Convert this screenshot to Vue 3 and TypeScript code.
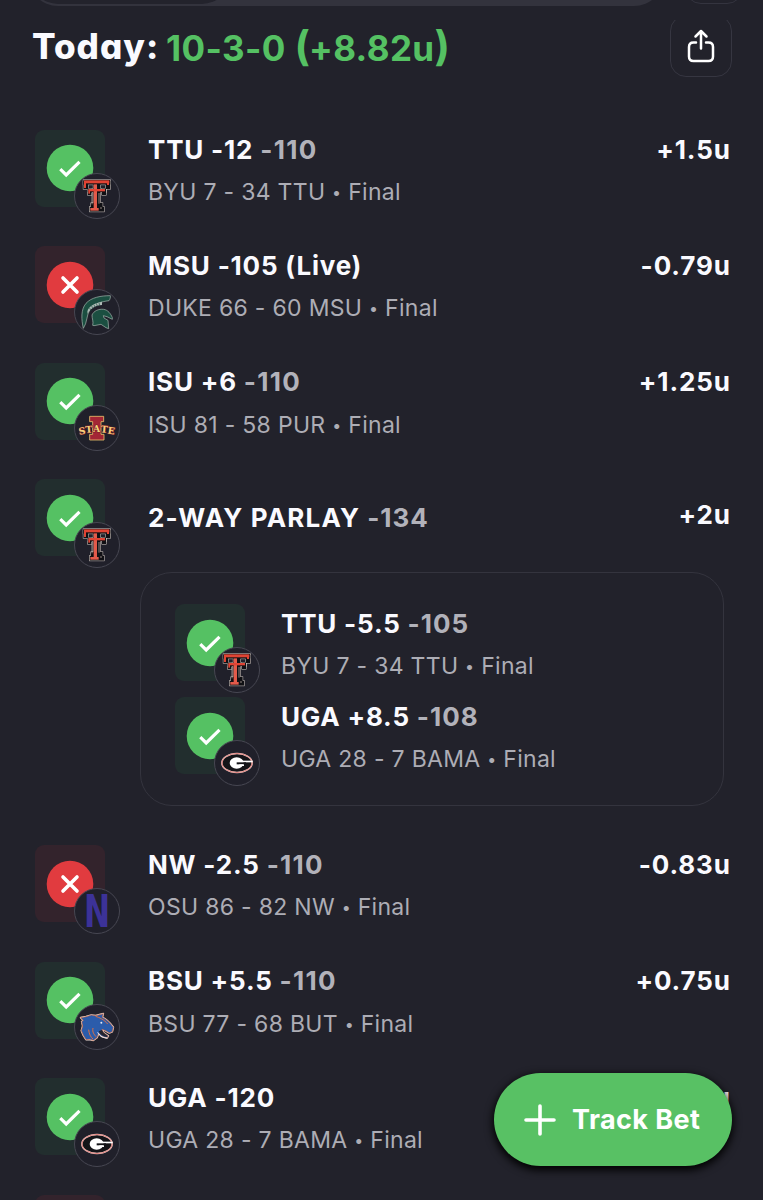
<script setup lang="ts">
type Team = 'ttu' | 'msu' | 'isu' | 'uga' | 'nw' | 'bsu'

interface Leg {
  pick: string
  odds?: string
  score?: string
  won: boolean
  team: Team
}

interface Bet extends Leg {
  units: string
  legs?: Leg[]
}

const bets: Bet[] = [
  { pick: 'TTU -12', odds: '-110', score: 'BYU 7 - 34 TTU', won: true, team: 'ttu', units: '+1.5u' },
  { pick: 'MSU -105 (Live)', score: 'DUKE 66 - 60 MSU', won: false, team: 'msu', units: '-0.79u' },
  { pick: 'ISU +6', odds: '-110', score: 'ISU 81 - 58 PUR', won: true, team: 'isu', units: '+1.25u' },
  {
    pick: '2-WAY PARLAY', odds: '-134', won: true, team: 'ttu', units: '+2u',
    legs: [
      { pick: 'TTU -5.5', odds: '-105', score: 'BYU 7 - 34 TTU', won: true, team: 'ttu' },
      { pick: 'UGA +8.5', odds: '-108', score: 'UGA 28 - 7 BAMA', won: true, team: 'uga' },
    ],
  },
  { pick: 'NW -2.5', odds: '-110', score: 'OSU 86 - 82 NW', won: false, team: 'nw', units: '-0.83u' },
  { pick: 'BSU +5.5', odds: '-110', score: 'BSU 77 - 68 BUT', won: true, team: 'bsu', units: '+0.75u' },
  { pick: 'UGA -120', score: 'UGA 28 - 7 BAMA', won: true, team: 'uga', units: '+1u' },
]
</script>

<template>
  <main class="screen">
    <svg class="symbols" aria-hidden="true">
      <defs>
        <g id="tt-shape">
          <rect x="178" y="181" width="77" height="10" />
          <rect x="178" y="184" width="10" height="20" />
          <rect x="245" y="184" width="10" height="20" />
          <rect x="208" y="186" width="17" height="80" />
          <rect x="191" y="207" width="51" height="7" />
          <rect x="191" y="207" width="8" height="15" />
          <rect x="234" y="207" width="8" height="15" />
          <rect x="197" y="261" width="39" height="11" />
          <rect x="201" y="250" width="31" height="12" />
        </g>
        <symbol id="logo-ttu" viewBox="145 155 144 144">
          <use href="#tt-shape" fill="#d9cfc8" stroke="#d9cfc8" stroke-width="7" />
          <use href="#tt-shape" fill="#101014" stroke="#101014" stroke-width="4" />
          <g fill="#e04434">
            <rect x="178" y="180" width="76" height="9" />
            <rect x="178" y="186" width="6" height="17" />
            <rect x="247" y="186" width="6" height="8" />
            <rect x="207" y="192" width="10" height="72" fill="#e35a4a" />
            <rect x="191" y="206" width="50" height="7" />
            <rect x="191" y="210" width="5" height="10" />
            <rect x="197" y="263" width="25" height="8" fill="#e35a4a" />
          </g>
          <path d="M202 218V252M223 218V250M226 263H232" fill="none" stroke="#d6c3b8" stroke-width="2" />
        </symbol>
        <symbol id="logo-msu" viewBox="145 155 144 144">
          <path d="M176 276C170 250 168 220 184 201C200 183 229 178 257 178C258 183 256 189 253 193C229 196 206 203 196 219C185 237 188 259 176 276Z" fill="#1b4f41" stroke="#a9bab2" stroke-width="2" />
          <path d="M188 226C191 210 207 201 232 196L232 206C212 207 198 216 189 232Z" fill="#aebbb6" />
          <path d="M195 215L199 224M201 209L205 218M208 205L211 213M215 201L218 210M223 199L225 208" stroke="#1d5344" stroke-width="2" />
          <path d="M202 236C207 224 222 217 237 219C250 221 258 232 263 244L263 249L247 241L236 238L238 245L250 252L252 277L244 274L229 264L208 268L204 267C207 256 202 247 202 236Z" fill="#1b4f41" stroke="#a9bab2" stroke-width="2" />
        </symbol>
        <symbol id="logo-isu" viewBox="145 158 144 144">
          <path d="M195 195H237V211H229V249H238V266H195V249H204V211H195Z" fill="#a32535" stroke="#e8c06a" stroke-width="2.5" />
          <g class="isu-word">
            <text x="174" y="249" transform="rotate(-9 174 249)">S</text>
            <text x="194" y="244" transform="rotate(-5 194 244)">T</text>
            <text x="216" y="243">A</text>
            <text x="238" y="244" transform="rotate(5 238 244)">T</text>
            <text x="258" y="248" transform="rotate(9 258 248)">E</text>
          </g>
        </symbol>
        <symbol id="logo-uga" viewBox="145 155 144 144">
          <ellipse cx="217" cy="227" rx="45.500" ry="28.500" fill="#141418" stroke="#f6d9d5" stroke-width="4.500" />
          <ellipse cx="217" cy="227" rx="45.500" ry="28.500" fill="none" stroke="#d85e5a" stroke-width="2.200" />
          <ellipse cx="216" cy="227" rx="21" ry="17" fill="#fff" />
          <rect x="214" y="220" width="50" height="5" fill="#fff" />
          <rect x="216" y="225" width="28" height="6" fill="#141418" />
          <rect x="224" y="231" width="14" height="5" fill="#fff" />
        </symbol>
        <symbol id="logo-nw" viewBox="145 155 144 144">
          <text class="nw-mark" transform="translate(217 276) scale(.71 1)">N</text>
        </symbol>
        <symbol id="logo-bsu" viewBox="145 155 144 144">
          <path d="M168 199L184 196L200 191L213 193L236 187L233 198C246 204 256 214 266 228L263 241L254 245L244 239L232 234L237 244L251 254L247 260L231 255L222 246L217 259L206 267L194 264L184 265L176 252L170 238L174 224L171 211L176 207Z" fill="#2b5cab" stroke="#e9dcd5" stroke-width="5" stroke-linejoin="round" />
          <path d="M168 199L184 196L200 191L213 193L236 187L233 198C246 204 256 214 266 228L263 241L254 245L244 239L232 234L237 244L251 254L247 260L231 255L222 246L217 259L206 267L194 264L184 265L176 252L170 238L174 224L171 211L176 207Z" fill="#2b5cab" stroke="#d5683c" stroke-width="2" stroke-linejoin="round" />
          <path d="M213 195C224 199 238 204 249 218M192 235C193 248 198 257 205 263M205 230C202 243 209 250 214 256" fill="none" stroke="#dd7043" stroke-width="3" />
          <path d="M222 240C228 253 238 256 247 257L249 254L237 244L231 236Z" fill="#24242d" />
          <path d="M219 243C226 256 238 260 248 260" fill="none" stroke="#f0f0f4" stroke-width="3" />
          <circle cx="230" cy="214" r="3" fill="#e5e9f2" />
        </symbol>
        <symbol id="mark-won" viewBox="0 0 48 48">
          <circle cx="24" cy="24" r="23.300" fill="#55c163" />
          <path d="M14.300 25.200L20.200 30.900L33.500 17.800" fill="none" stroke="#fff" stroke-width="3.200" />
        </symbol>
        <symbol id="mark-lost" viewBox="0 0 48 48">
          <circle cx="24" cy="24" r="23.300" fill="#e13b3f" />
          <path d="M17 17L31 31M31 17L17 31" fill="none" stroke="#fff" stroke-width="3.600" stroke-linecap="round" />
        </symbol>
      </defs>
    </svg>

    <div class="topbar">
      <div class="segments"><div class="segment-active"></div></div>
      <div class="filter"></div>
    </div>

    <header class="summary">
      <h1><span class="label">Today:</span><span class="record">10-3-0 <span class="paren">(</span>+8.82u<span class="paren">)</span></span></h1>
      <button class="share" aria-label="Share">
        <svg viewBox="0 0 28 34" width="28" height="34">
          <path d="M9 13.500H6.500Q2 13.500 2 18V27.500Q2 32 6.500 32H21.500Q26 32 26 27.500V18Q26 13.500 21.500 13.500H19M14 19.500V2.500M8.500 7.500L14 2L19.500 7.500" />
        </svg>
      </button>
    </header>

    <section class="bets">
      <template v-for="(bet, i) in bets" :key="i">
        <article class="row" :class="{ parlay: bet.legs }">
          <div class="tile" :class="bet.won ? 'won' : 'lost'">
            <svg class="mark"><use :href="bet.won ? '#mark-won' : '#mark-lost'" /></svg>
            <div class="badge"><svg><use :href="'#logo-' + bet.team" /></svg></div>
          </div>
          <div class="info">
            <div class="title"><span class="pick">{{ bet.pick }}</span> <span v-if="bet.odds" class="odds">{{ bet.odds }}</span></div>
            <div v-if="bet.score" class="score">{{ bet.score }} <span class="dot">•</span> Final</div>
          </div>
          <div class="units">{{ bet.units }}</div>
        </article>
        <div v-if="bet.legs" class="legs">
          <article v-for="leg in bet.legs" :key="leg.pick" class="row leg">
            <div class="tile" :class="leg.won ? 'won' : 'lost'">
              <svg class="mark"><use :href="leg.won ? '#mark-won' : '#mark-lost'" /></svg>
              <div class="badge"><svg><use :href="'#logo-' + leg.team" /></svg></div>
            </div>
            <div class="info">
              <div class="title"><span class="pick">{{ leg.pick }}</span> <span class="odds">{{ leg.odds }}</span></div>
              <div class="score">{{ leg.score }} <span class="dot">•</span> Final</div>
            </div>
          </article>
        </div>
      </template>
      <div class="row"><div class="tile lost"></div></div>
    </section>

    <button class="track">
      <svg viewBox="0 0 32 32" width="32" height="32"><path d="M16 2V30M2 16H30" /></svg>
      <span>Track Bet</span>
    </button>
  </main>
</template>

<style>
html, body { background: #22222b; }
</style>

<style scoped>
.screen {
  position: relative;
  width: 763px;
  height: 1200px;
  overflow: hidden;
  background: #22222b;
  color: #fafaff;
  font-family: Inter, "Liberation Sans", sans-serif;
}
.symbols { position: absolute; width: 0; height: 0; }
.topbar {
  display: flex;
  align-items: flex-end;
  justify-content: space-between;
  height: 6px;
  padding: 0 20px 0 28px;
}
.segments {
  display: flex;
  align-items: flex-end;
  width: 636px;
  height: 60px;
  box-sizing: border-box;
  padding: 2px;
  border-radius: 30px;
  background: #33333d;
}
.segment-active { width: 200px; height: 56px; border-radius: 28px; background: #23232c; }
.filter {
  width: 58px;
  height: 56px;
  margin-bottom: 2px;
  box-sizing: border-box;
  border: 1px solid #34343f;
  border-radius: 16px;
}
.summary {
  display: flex;
  justify-content: space-between;
  height: 124px;
  padding: 0 31px 0 32px;
}
h1 {
  display: flex;
  align-items: flex-start;
  margin: 0;
  padding-top: 18px;
  font-size: 35px;
  line-height: 44px;
  font-weight: 800;
  font-feature-settings: "cv11", "ss03";
  white-space: nowrap;
}
.label { width: 134px; letter-spacing: 1px; }
.record { color: #55c163; padding-top: 2px; letter-spacing: .4px; font-weight: 750; }
.paren { font-size: 41px; line-height: 0; font-weight: 650; letter-spacing: -1px; }
.share {
  display: grid;
  place-items: center;
  width: 62px;
  height: 62px;
  margin-top: 9px;
  padding: 0;
  border: 1px solid #363641;
  border-radius: 16px;
  background: transparent;
  clip-path: inset(5px 0 0 0);
}
.share svg, .track svg { fill: none; stroke: #fff; stroke-width: 2.500; stroke-linecap: round; stroke-linejoin: round; }
.bets { padding: 0 32.500px 0 35px; }
.row { display: flex; align-items: flex-start; height: 116.400px; }
.tile {
  position: relative;
  flex: none;
  width: 70px;
  height: 77px;
  border-radius: 9px;
}
.won { background: #222e2e; }
.lost { background: #33232c; }
.mark { position: absolute; left: 11px; top: 14.400px; width: 48px; height: 48px; }
.badge {
  position: absolute;
  left: 39px;
  top: 42.600px;
  width: 46px;
  height: 46px;
  box-sizing: border-box;
  border: 1px solid #474752;
  border-radius: 50%;
  background: #20202a;
}
.badge svg { display: block; width: 48px; height: 48px; margin: -2px; }
.isu-word text {
  font: 700 28px "DejaVu Serif", serif;
  text-anchor: middle;
  fill: #f5d27c;
  stroke: #7e202c;
  stroke-width: 3px;
  paint-order: stroke;
}
.nw-mark { font: 700 132px "DejaVu Sans", sans-serif; text-anchor: middle; fill: #3c3298; }
.info { flex: 1; margin-left: 43px; padding-top: 3.600px; white-space: nowrap; }
.title { font-size: 26px; line-height: 32px; font-weight: 700; letter-spacing: .8px; }
.odds { color: #b2b2ba; letter-spacing: 1.300px; }
.leg .odds, .parlay .odds { letter-spacing: 1px; }
.parlay .pick { letter-spacing: 1.200px; }
.score { margin-top: 11.400px; font-size: 23px; line-height: 30px; color: #adadb5; letter-spacing: .3px; }
.dot { font-size: 16px; line-height: 0; vertical-align: 2px; margin: 0; }
.units { padding-top: 3.600px; font-size: 26px; line-height: 32px; font-weight: 700; letter-spacing: .9px; margin-right: -.4px; }
.parlay { height: 93px; }
.parlay .info { padding-top: 22.500px; }
.parlay .units { padding-top: 20px; }
.legs {
  box-sizing: border-box;
  width: 584px;
  height: 234px;
  margin: 0 0 39.300px 105px;
  padding: 31px 34px;
  border: 1px solid #34343e;
  border-radius: 32px;
}
.leg { height: 93px; }
.leg .info { margin-left: 36px; }
.track {
  position: absolute;
  left: 494px;
  top: 1073px;
  display: flex;
  align-items: center;
  width: 238px;
  height: 93px;
  padding: 0 0 0 30px;
  border: 0;
  border-radius: 47px;
  background: #58c164;
  box-shadow: 0 3px 9px 1px #000;
  color: #fff;
  font: 650 27px/34px Inter, "Liberation Sans", sans-serif;
  letter-spacing: .4px;
  white-space: nowrap;
}
.track span { margin-left: 16px; }
.track svg { stroke-width: 3.600; }
</style>
